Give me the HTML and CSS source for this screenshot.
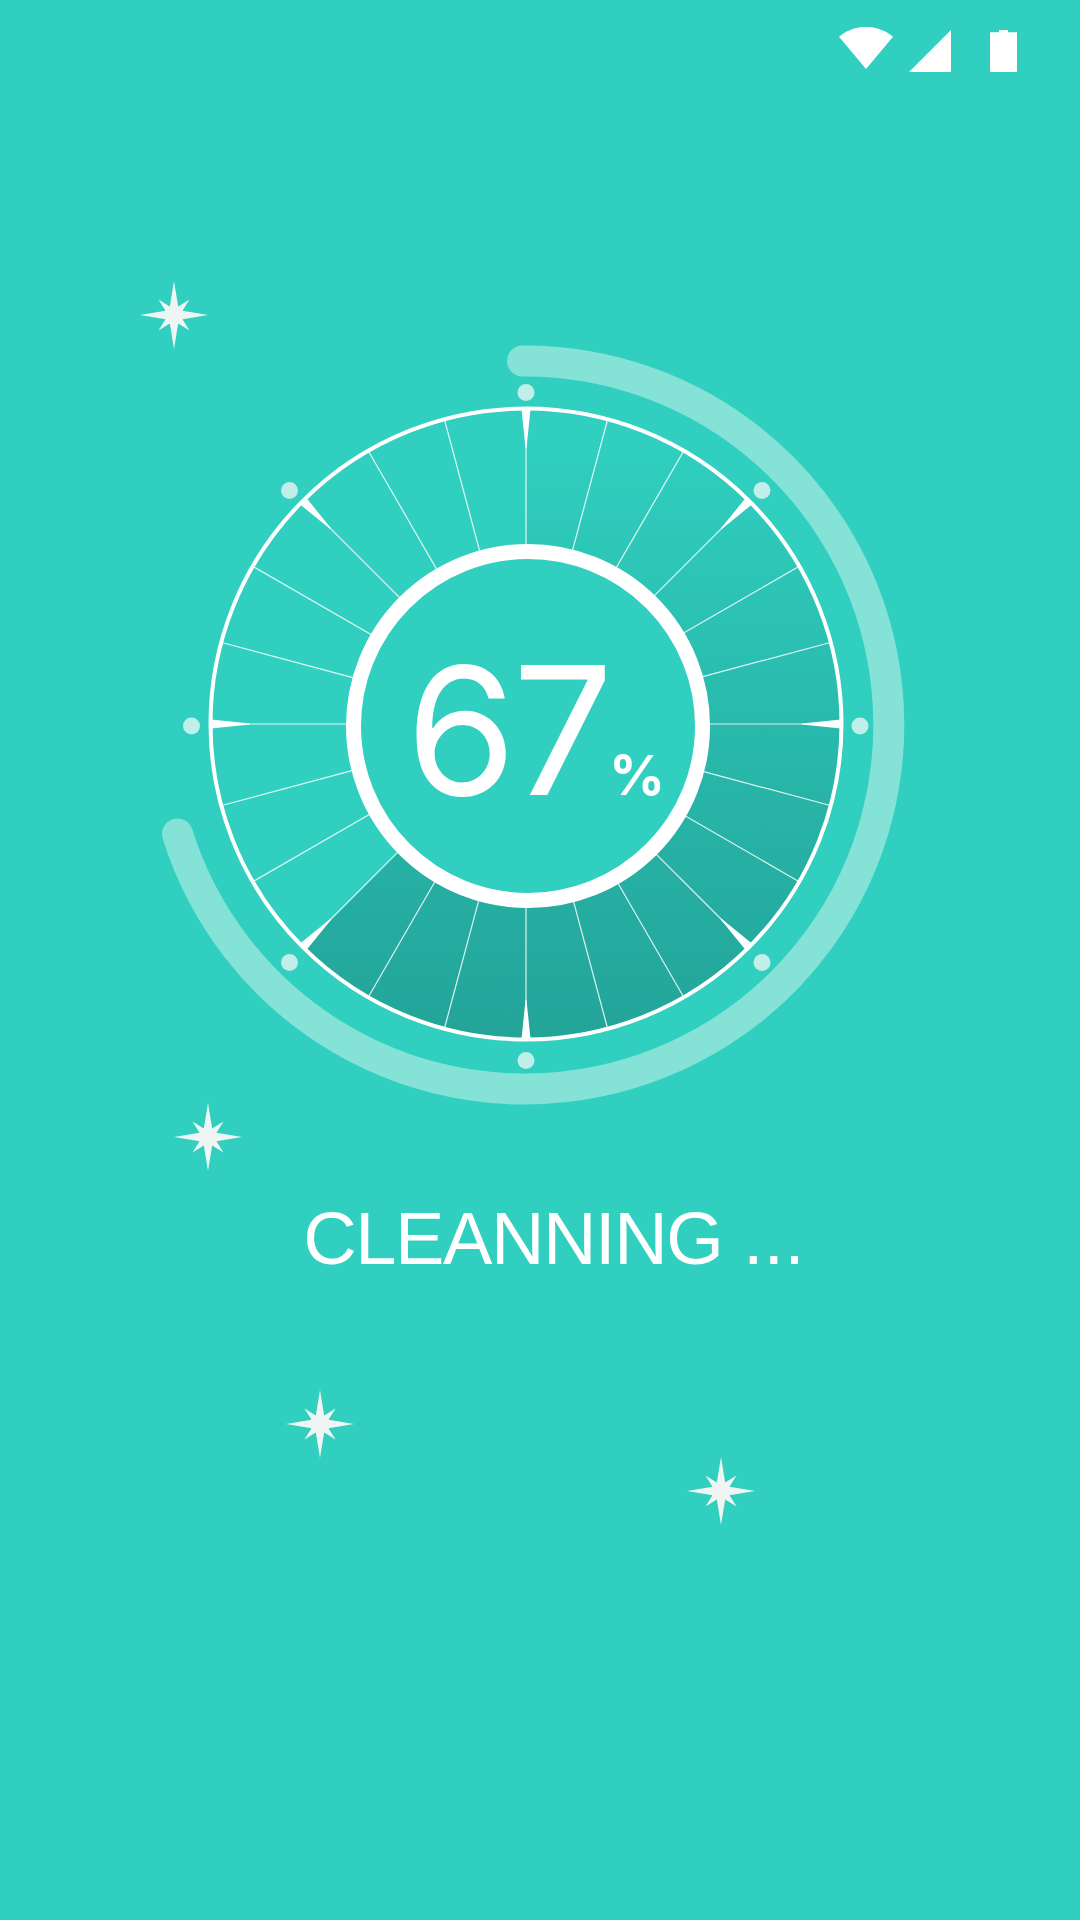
FILE: index.html
```html
<!DOCTYPE html>
<html lang="en">
<head>
	<meta charset="UTF-8">
	<title>Cleaning</title>
	<link rel="stylesheet" href="styles.css">
</head>
<body>
	<div class="screen">
		<div class="status">
			<svg class="wifi" width="54" height="42" viewBox="0 0 54 42"><path d="M0 9.7 C16 -3.4 38 -3.4 54 9.7 L27 42 Z"/></svg>
			<svg class="signal" width="42" height="42" viewBox="0 0 42 42"><path d="M0 42 H42 V0 Z"/></svg>
			<svg class="battery" width="27" height="42" viewBox="0 0 27 42"><path d="M0 2.3 H9 V0 H18 V2.3 H27 V42 H0 Z"/></svg>
		</div>

		<svg width="0" height="0" class="defs">
			<defs>
				<path id="sparkle" d="M0 -34 L4.2 -8.5 L15.5 -15.5 L8.5 -4.2 L34 0 L8.5 4.2 L15.5 15.5 L4.2 8.5 L0 34 L-4.2 8.5 L-15.5 15.5 L-8.5 4.2 L-34 0 L-8.5 -4.2 L-15.5 -15.5 L-4.2 -8.5 Z"/>
			</defs>
		</svg>
		<svg class="sparkle s1" width="70" height="70" viewBox="-35 -35 70 70"><use href="#sparkle"/></svg>
		<svg class="sparkle s2" width="70" height="70" viewBox="-35 -35 70 70"><use href="#sparkle"/></svg>
		<svg class="sparkle s3" width="70" height="70" viewBox="-35 -35 70 70"><use href="#sparkle"/></svg>
		<svg class="sparkle s4" width="70" height="70" viewBox="-35 -35 70 70"><use href="#sparkle"/></svg>

		<div class="dial">
			<svg class="wheel" width="800" height="800" viewBox="0 0 800 800">
				<defs>
					<linearGradient id="shade" gradientUnits="userSpaceOnUse" x1="0" y1="120" x2="0" y2="715">
						<stop offset="0" stop-color="#20a095" stop-opacity="0"/>
						<stop offset="1" stop-color="#23a499"/>
					</linearGradient>
					<g id="wedge"><path d="M395.5 85 H404.5 L400.5 124 H399.5 Z"/></g>
				</defs>

				<!-- progress arc -->
				<path class="arc" d="M396.5 37 A364 364 0 1 1 51.5 510"/>

				<!-- shaded part of the wheel, 0 to 225 deg -->
				<path class="shade" fill="url(#shade)" d="M400 85 A315 315 0 1 1 177.3 622.7 L279.8 520.2 A170 170 0 1 0 400 230 Z"/>

				<!-- spokes every 15 deg, a wedge every 45 -->
				<g class="spokes">
					<line x1="400" y1="85" x2="400" y2="240"/>
					<line x1="400" y1="85" x2="400" y2="240" transform="rotate(15 400 400)"/>
					<line x1="400" y1="85" x2="400" y2="240" transform="rotate(30 400 400)"/>
					<line x1="400" y1="85" x2="400" y2="240" transform="rotate(45 400 400)"/>
					<line x1="400" y1="85" x2="400" y2="240" transform="rotate(60 400 400)"/>
					<line x1="400" y1="85" x2="400" y2="240" transform="rotate(75 400 400)"/>
					<line x1="400" y1="85" x2="400" y2="240" transform="rotate(90 400 400)"/>
					<line x1="400" y1="85" x2="400" y2="240" transform="rotate(105 400 400)"/>
					<line x1="400" y1="85" x2="400" y2="240" transform="rotate(120 400 400)"/>
					<line x1="400" y1="85" x2="400" y2="240" transform="rotate(135 400 400)"/>
					<line x1="400" y1="85" x2="400" y2="240" transform="rotate(150 400 400)"/>
					<line x1="400" y1="85" x2="400" y2="240" transform="rotate(165 400 400)"/>
					<line x1="400" y1="85" x2="400" y2="240" transform="rotate(180 400 400)"/>
					<line x1="400" y1="85" x2="400" y2="240" transform="rotate(195 400 400)"/>
					<line x1="400" y1="85" x2="400" y2="240" transform="rotate(210 400 400)"/>
					<line x1="400" y1="85" x2="400" y2="240" transform="rotate(225 400 400)"/>
					<line x1="400" y1="85" x2="400" y2="240" transform="rotate(240 400 400)"/>
					<line x1="400" y1="85" x2="400" y2="240" transform="rotate(255 400 400)"/>
					<line x1="400" y1="85" x2="400" y2="240" transform="rotate(270 400 400)"/>
					<line x1="400" y1="85" x2="400" y2="240" transform="rotate(285 400 400)"/>
					<line x1="400" y1="85" x2="400" y2="240" transform="rotate(300 400 400)"/>
					<line x1="400" y1="85" x2="400" y2="240" transform="rotate(315 400 400)"/>
					<line x1="400" y1="85" x2="400" y2="240" transform="rotate(330 400 400)"/>
					<line x1="400" y1="85" x2="400" y2="240" transform="rotate(345 400 400)"/>
				</g>
				<g class="wedges">
					<use href="#wedge"/>
					<use href="#wedge" transform="rotate(45 400 400)"/>
					<use href="#wedge" transform="rotate(90 400 400)"/>
					<use href="#wedge" transform="rotate(135 400 400)"/>
					<use href="#wedge" transform="rotate(180 400 400)"/>
					<use href="#wedge" transform="rotate(225 400 400)"/>
					<use href="#wedge" transform="rotate(270 400 400)"/>
					<use href="#wedge" transform="rotate(315 400 400)"/>
				</g>
				<circle class="rim" cx="400" cy="400" r="315.5"/>
				<circle class="hub" cx="402" cy="402" r="174.5"/>

				<!-- dots round the rim -->
				<g class="dots">
					<circle cx="400" cy="68.5" r="8.5"/>
					<circle cx="636" cy="166.5" r="8.5"/>
					<circle cx="734" cy="402" r="8.5"/>
					<circle cx="636" cy="638.5" r="8.5"/>
					<circle cx="400" cy="736.5" r="8.5"/>
					<circle cx="163.5" cy="638.5" r="8.5"/>
					<circle cx="65.5" cy="402" r="8.5"/>
					<circle cx="163.5" cy="166.5" r="8.5"/>
				</g>
			</svg>
			<div class="readout"><span class="value">67</span><span class="unit">%</span></div>
		</div>

		<h1 class="title"><span class="word">CLEANNING</span> ...</h1>
	</div>
</body>
</html>
```

FILE: styles.css
```css
html, body {
	margin: 0;
	padding: 0;
}
body {
	background: #30cfbf;
}
.screen {
	position: relative;
	width: 1080px;
	height: 1920px;
	overflow: hidden;
	font-family: "Liberation Sans", sans-serif;
	color: #fff;
}
.defs {
	display: block;
}

.status {
	display: flex;
	justify-content: flex-end;
	align-items: flex-end;
	height: 72px;
	padding-right: 63px;
	fill: #fff;
}
.wifi {
	margin-right: 16px;
	margin-bottom: 3px;
}
.signal {
	margin-right: 39px;
}

.sparkle {
	position: absolute;
	fill: #eff5f3;
}
.s1 { left: 139px; top: 280px; }
.s2 { left: 173px; top: 1102px; }
.s3 { left: 285px; top: 1389px; }
.s4 { left: 686px; top: 1456px; }

.dial {
	position: relative;
	width: 800px;
	height: 800px;
	margin-top: 252px;
	margin-left: 126px;
}
.wheel {
	display: block;
}
.arc {
	fill: none;
	stroke: #84e2d7;
	stroke-width: 31;
	stroke-linecap: round;
}
.spokes line {
	stroke: #fff;
	stroke-width: 1.2;
	stroke-opacity: .85;
}
.wedges {
	fill: #fff;
}
.rim {
	fill: none;
	stroke: #fff;
	stroke-width: 4;
}
.hub {
	fill: #30cfbf;
	stroke: #fff;
	stroke-width: 15;
}
.dots {
	fill: #c0eee8;
}

.readout {
	position: absolute;
	left: 0;
	top: 0;
	width: 800px;
	height: 800px;
	display: flex;
	justify-content: center;
	align-items: baseline;
	box-sizing: border-box;
	padding-top: 300px;
	padding-left: 19px;
	font-family: Inter, sans-serif;
}
.value {
	font-size: 178px;
	font-weight: 400;
	line-height: 213px;
	letter-spacing: -4px;
}
.unit {
	font-size: 55px;
	font-weight: 700;
}

.title {
	margin: 0;
	margin-top: 72px;
	padding-left: 28px;
	text-align: center;
	font-size: 74px;
	font-weight: 400;
	line-height: 86px;
}
.word {
	letter-spacing: -1.4px;
}
```
